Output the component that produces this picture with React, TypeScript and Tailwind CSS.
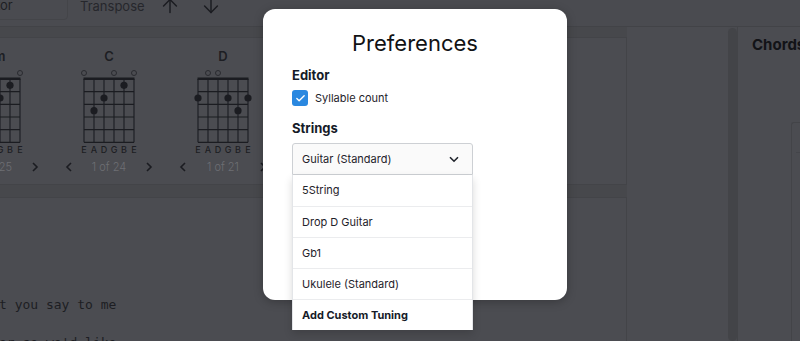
import { ArrowUp, ArrowDown, Check } from "lucide-react";

type Chord = { name: string; opens: number[]; dots: [number, number][]; page: string };

const CHORDS: Chord[] = [
  { name: "Am", opens: [0, 5], dots: [[2, 2], [3, 2], [4, 1]], page: "1 of 25" },
  { name: "C", opens: [0, 3, 5], dots: [[4, 1], [2, 2], [1, 3]], page: "1 of 24" },
  { name: "D", opens: [1, 2], dots: [[0, 2], [3, 2], [5, 2], [4, 3]], page: "1 of 21" },
  { name: "Em", opens: [0, 3, 4, 5], dots: [[1, 2], [2, 2]], page: "1 of 22" },
  { name: "G", opens: [2, 3, 4], dots: [[1, 2], [0, 3], [5, 3]], page: "1 of 23" },
];

const STRINGS = ["E", "A", "D", "G", "B", "E"];
const TUNINGS = ["5String", "Drop D Guitar", "Gb1", "Ukulele (Standard)"];

const INK = "#1b1c21";
const XS = [5, 15, 25, 35, 45, 55];
const FRET = 12.667;

const Diagram = ({ chord }: { chord: Chord }) => (
  <svg width="60" height="80" viewBox="0 0 60 80">
    {chord.opens.map((i) => (
      <circle key={`o${i}`} cx={XS[i]} cy={8} r={2.5} fill="none" stroke="#2a2b30" strokeWidth={1} />
    ))}
    {XS.map((x) => (
      <line key={`s${x}`} x1={x} y1={14} x2={x} y2={14 + FRET * 5} stroke={INK} strokeWidth={1.1} />
    ))}
    {[1, 2, 3, 4, 5].map((k) => (
      <line key={`f${k}`} x1={5} y1={14 + FRET * k} x2={55} y2={14 + FRET * k} stroke={INK} strokeWidth={1.1} />
    ))}
    <rect x={4.5} y={12.5} width={51} height={2.5} fill={INK} />
    {chord.dots.map(([s, f]) => (
      <circle key={`d${s}${f}`} cx={XS[s]} cy={14 + FRET * (f - 0.5)} r={3.6} fill={INK} />
    ))}
  </svg>
);

const Caret = ({ dir }: { dir: "l" | "r" }) => (
  <svg width="8" height="10" viewBox="0 0 8 10">
    <path d={dir === "l" ? "M6 1 L2 5 L6 9" : "M2 1 L6 5 L2 9"} fill="none" stroke={INK} strokeWidth={1.6} />
  </svg>
);

const ChordCard = ({ chord }: { chord: Chord }) => (
  <div className="w-[114px] shrink-0 flex flex-col items-center">
    <div className="h-[18px] leading-[18px] text-[13px] font-semibold text-[#1d1e23]">{chord.name}</div>
    <Diagram chord={chord} />
    <div className="grid grid-cols-6 w-[60px] h-[10px] leading-[10px] text-[9px] font-medium text-[#1d1e23] text-center">
      {STRINGS.map((s, i) => (
        <span key={i}>{s}</span>
      ))}
    </div>
    <div className="mt-[3px] w-[88px] h-[18px] flex items-center justify-between">
      <Caret dir="l" />
      <span className="text-[11px] font-light text-[#6e6f74]">{chord.page}</span>
      <Caret dir="r" />
    </div>
  </div>
);

export default function App() {
  return (
    <div className="relative w-[800px] h-[341px] overflow-hidden bg-[#47484c] font-['Inter',sans-serif]">
      {/* toolbar */}
      <div className="h-[27px] flex items-start bg-[#4a4b50] border-b border-[#424347]">
        <div className="shrink-0 ml-[-40px] mt-[-8px] w-[108px] h-[28px] flex items-center pl-[16px] rounded-[4px] border border-[#444549] text-[13px] text-[#1e1f24]">
          Editor
        </div>
        <span className="ml-[12px] leading-[12px] text-[13px] text-[#26272c]">Transpose</span>
        <ArrowUp size={22} strokeWidth={1.6} color={INK} className="ml-[14px] mt-[-5px]" />
        <ArrowDown size={22} strokeWidth={1.6} color={INK} className="ml-[19px] mt-[-5px]" />
      </div>

      <div className="flex h-[314px]">
        {/* main column */}
        <div className="w-[627px] shrink-0 flex flex-col gap-[12px] pt-[10px]">
          <div className="h-[148px] shrink-0 ml-[-2px] w-[629px] bg-[#4b4c51] border border-[#434448] pt-[9px] overflow-hidden">
            <div className="flex ml-[-61px]">
              {CHORDS.map((c) => (
                <ChordCard key={c.name} chord={c} />
              ))}
            </div>
          </div>
          <div className="flex-1 ml-[-2px] w-[629px] bg-[#4b4c51] border border-[#434448] pt-[97px] font-['DejaVu_Sans_Mono',monospace] text-[13px] text-[#1d1e23]">
            <div className="leading-[20px] whitespace-pre">t you say to me</div>
            <div className="mt-[18px] leading-[20px] whitespace-pre">or so we'd like</div>
          </div>
        </div>
        <div className="w-[101px] shrink-0 bg-[#4b4c51]" />
        {/* scrollbar */}
        <div className="w-[9px] shrink-0 bg-[#4a4b50] pt-[1px]">
          <div className="h-full rounded-full bg-[#434448]" />
        </div>
        {/* sidebar */}
        <div className="flex-1 min-w-0 overflow-hidden border-l border-[#434448] bg-[#4b4c51] pl-[14px] pt-[8px]">
          <div className="leading-[20px] text-[15px] font-bold text-[#121317] whitespace-nowrap">Chords</div>
          <div className="ml-[39px] mt-[67px] h-[300px] border-l border-t border-[#434448] rounded-tl-[3px]">
            <div className="ml-[4px] h-[30px] border-b border-[#44454a]" />
          </div>
        </div>
      </div>

      {/* preferences modal */}
      <div className="absolute left-[263px] top-[9px] w-[304px] h-[291px] rounded-[12px] bg-white shadow-[0_2px_10px_rgba(0,0,0,0.25)] px-[29px] pt-[20px]">
        <h2 className="text-center leading-[28px] text-[22px] text-[#111214]">Preferences</h2>
        <div className="mt-[9px] leading-[18px] text-[13px] font-bold text-[#151b28]">Editor</div>
        <label className="mt-[6px] h-[16px] flex items-center gap-[7px]">
          <span className="w-[16px] h-[16px] rounded-[3px] bg-[#2a88e0] flex items-center justify-center">
            <Check size={11} strokeWidth={3} color="#ffffff" />
          </span>
          <span className="text-[11px] text-[#1f232b]">Syllable count</span>
        </label>
        <div className="mt-[13px] leading-[18px] text-[13px] font-bold text-[#151b28]">Strings</div>
        <div className="relative mt-[6px] w-[181px]">
          <div className="h-[32px] flex items-center justify-between pl-[9px] pr-[13px] bg-[#fafafa] border border-[#cdd0d4] rounded-t-[3px] text-[11px] text-[#1f232b]">
            Guitar (Standard)
            <svg width="10" height="7" viewBox="0 0 10 7">
              <path d="M1 1.2 L5 5.2 L9 1.2" fill="none" stroke="#1f232b" strokeWidth={1.6} />
            </svg>
          </div>
          <div className="absolute left-0 right-0 top-full bg-white border-x border-[#e3e5e8] shadow-[0_4px_8px_rgba(0,0,0,0.15)] z-10">
            {TUNINGS.map((t, i) => (
              <div
                key={t}
                className={`h-[31px] flex items-center pl-[9px] text-[11px] text-[#1f232b] ${i > 0 ? "border-t border-[#ebecee]" : ""}`}
              >
                {t}
              </div>
            ))}
            <div className="h-[31px] flex items-center pl-[9px] border-t border-[#ebecee] text-[11px] font-bold text-[#151b28]">
              Add Custom Tuning
            </div>
          </div>
        </div>
      </div>
    </div>
  );
}
